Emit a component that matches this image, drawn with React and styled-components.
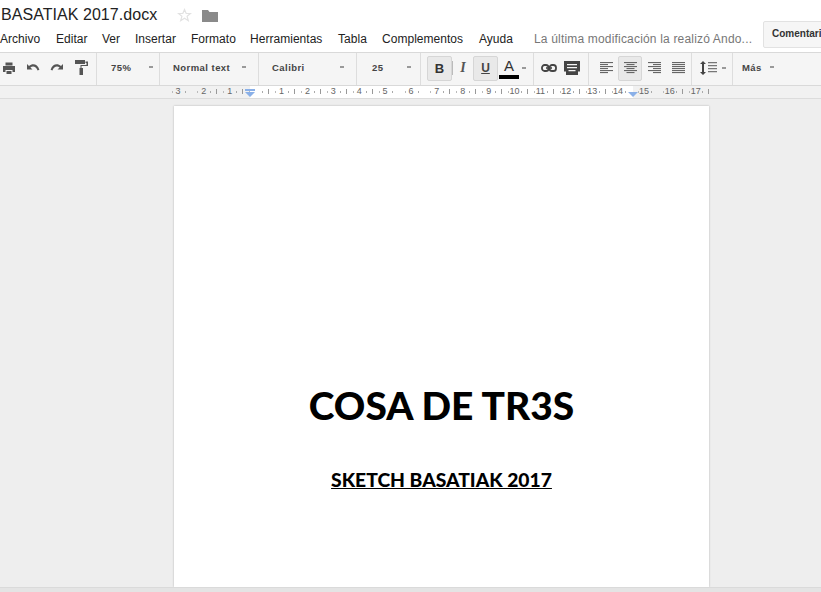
import React from 'react';
import styled, { createGlobalStyle } from 'styled-components';

const Global = createGlobalStyle`
  html, body { margin: 0; padding: 0; height: 100%; overflow: hidden; background: #eeeeee; }
  #root { height: 100%; }
`;

const Page = styled.div`
  width: 821px;
  height: 592px;
  display: flex;
  flex-direction: column;
  overflow: hidden;
  font-family: "Liberation Sans", Arial, sans-serif;
  color: #222;
`;

const Header = styled.header`
  height: 52px;
  display: flex;
  background: #fff;
`;

const HeaderLeft = styled.div`
  width: 763px;
  flex: none;
`;

const TitleRow = styled.div`
  height: 30px;
  display: flex;
  align-items: center;
  padding-left: 1px;
`;

const DocTitle = styled.div`
  font-size: 16px;
  letter-spacing: 0.05px;
  line-height: 30px;
  color: #222;
  width: 176px;
`;

const TitleGap = styled.span`
  width: 10px;
  flex: none;
`;

const MenuRow = styled.nav`
  height: 22px;
  display: flex;
  align-items: center;
  font-size: 12px;
  padding-bottom: 4px;
  box-sizing: border-box;
`;

const MenuItem = styled.span`
  width: ${({ $w }) => $w}px;
  flex: none;
  color: #222;
  letter-spacing: 0.03px;
`;

const LastEdit = styled.span`
  color: #777;
  white-space: nowrap;
  letter-spacing: 0.18px;
`;

const CommentButton = styled.button`
  width: 70px;
  height: 27px;
  margin-top: 21px;
  flex: none;
  padding: 0 0 2px 8px;
  text-align: left;
  border: 1px solid #e2e2e2;
  border-radius: 2px;
  background: #f6f6f6;
  font: bold 10px "Liberation Sans", Arial, sans-serif;
  color: #333;
`;

const Toolbar = styled.div`
  height: 32px;
  display: flex;
  background: #f5f5f5;
  border-top: 1px solid #d9d9d9;
  border-bottom: 1px solid #d9d9d9;
`;

const Group = styled.div`
  width: ${({ $w }) => $w}px;
  flex: none;
  display: flex;
  align-items: center;
  gap: ${({ $gap }) => $gap || 0}px;
  padding: 0 0 2px ${({ $pl }) => $pl || 0}px;
  box-sizing: border-box;
  border-right: ${({ $plain }) => ($plain ? 'none' : '1px solid #dddddd')};
`;

const Drop = styled.div`
  flex: 1;
  display: flex;
  align-items: center;
  justify-content: space-between;
  padding: 0 ${({ $pr }) => $pr || 10}px 2px 0;
  font-size: 9.5px;
  font-weight: bold;
  letter-spacing: 0.45px;
  color: #444;
`;

const Caret = styled.span`
  width: 4px;
  height: 1.5px;
  background: #999;
  flex: none;
`;

const IconButton = styled.div`
  width: ${({ $w }) => $w || 18}px;
  height: 25px;
  flex: none;
  display: flex;
  align-items: center;
  justify-content: center;
  box-sizing: border-box;
  border-radius: 2px;
  border: 1px solid ${({ $on }) => ($on ? '#d6d6d6' : 'transparent')};
  background: ${({ $on }) => ($on ? '#e9e9e9' : 'transparent')};
`;

const BoldGlyph = styled.b`
  font-size: 13px;
  color: #333;
`;

const ItalicGlyph = styled.i`
  font: italic bold 14px "Liberation Serif", serif;
  color: #555;
`;

const UnderGlyph = styled.b`
  font-size: 12px;
  color: #444;
  text-decoration: underline;
`;

const Divider = styled.span`
  width: 1px;
  height: 14px;
  background: #bbb;
  flex: none;
`;

const ColorButton = styled.div`
  width: 20px;
  flex: none;
  margin: 0 3px 0 1px;
  display: flex;
  flex-direction: column;
  align-items: center;
  font-size: 15px;
  line-height: 15px;
  color: #333;
`;

const ColorBar = styled.span`
  width: 20px;
  height: 4px;
  background: #000;
  margin-top: 2px;
`;

const RulerBar = styled.div`
  height: 12px;
  display: flex;
  background: #f1f1f1;
  border-bottom: 1px solid #dcdcdc;
  padding-left: 165px;
`;

const Ruler = styled.div`
  position: relative;
  display: flex;
  width: 544px;
  height: 12px;
  background: linear-gradient(
    to right,
    transparent 85px,
    #fff 85px,
    #fff 468px,
    transparent 468px
  );
`;

const RulerCell = styled.div`
  width: 25.9px;
  flex: none;
  height: 12px;
  font-size: 9px;
  line-height: 11px;
  color: #666;
  text-align: center;
  background:
    linear-gradient(#bbb, #bbb) 6.5px 5px / 1px 2px no-repeat,
    linear-gradient(#aaa, #aaa) 19.5px 5px / 1px 2px no-repeat,
    linear-gradient(#999, #999) 25.5px 3px / 1px 5px no-repeat;
`;

const RulerMark = styled.svg`
  position: absolute;
  top: 3px;
  left: ${({ $x }) => $x}px;
`;

const Canvas = styled.main`
  height: 488px;
  background: #eeeeee;
  padding: 7px 0 0 174px;
  box-sizing: border-box;
  overflow: hidden;
`;

const Sheet = styled.section`
  width: 535px;
  height: 481px;
  background: #fff;
  box-shadow: 0 0 2px rgba(0, 0, 0, 0.25);
  display: flex;
  flex-direction: column;
  align-items: center;
  padding: 271px 0 0 0;
  box-sizing: border-box;
`;

const Heading = styled.h1`
  margin: 0;
  font: 900 38.9px/56px Lato, sans-serif;
  color: #000;
`;

const SubHeading = styled.h2`
  margin: 34px 0 0;
  font: 900 19.3px/26px Lato, sans-serif;
  color: #000;
  text-decoration: underline;
`;

const StatusBar = styled.div`
  flex: 1;
  background: #e4e4e4;
  border-top: 1px solid #dadada;
`;

const Svg = ({ w = 14, h = 14, vb, children, fill = '#555' }) => (
  <svg width={w} height={h} viewBox={vb || `0 0 ${w} ${h}`} fill={fill}>{children}</svg>
);

const PrintIcon = () => (
  <Svg>
    <path d="M3.5 1.5h7v3h-7zM1 5h12v6h-2.5V9h-7v2H1zM4.5 10h5v3h-5z" />
  </Svg>
);
const UndoIcon = () => (
  <Svg>
    <path d="M1 3v5.5h5.5L4.4 6.4C6.8 4.6 10.2 5.4 11.6 9.5L13.4 8.8C11.6 3.2 6.8 1.9 3 5z" />
  </Svg>
);
const RedoIcon = () => (
  <Svg>
    <path d="M13 3v5.5H7.5l2.1-2.1C7.2 4.6 3.8 5.4 2.4 9.5L.6 8.8C2.4 3.2 7.2 1.9 11 5z" />
  </Svg>
);
const PaintIcon = () => (
  <Svg h={16}>
    <path d="M1 0h10v4H1zM11.5 1.5H14v4.5H7.5v2H9v7H5.5V8H6.5V5H12.5V3h-1z" />
  </Svg>
);
const LinkIcon = () => (
  <Svg w={16} h={8} fill="none">
    <rect x="1" y="1" width="6.5" height="6" rx="2.6" stroke="#444" strokeWidth="1.8" />
    <rect x="8.5" y="1" width="6.5" height="6" rx="2.6" stroke="#444" strokeWidth="1.8" />
    <path d="M5 4h6" stroke="#444" strokeWidth="1.6" />
  </Svg>
);
const NoteIcon = () => (
  <Svg w={16} h={14} fill="#444">
    <path d="M0 0h16v10.5h-2V14H2v-3.5H0zM3 3v1.2h10V3zM3 6v1.2h10V6zM4.5 9v1.2h7V9z" fillRule="evenodd" />
  </Svg>
);
const StarIcon = () => (
  <Svg w={15} h={15} fill="none">
    <path d="M7.5 1.5l1.7 4h4.3l-3.4 2.8 1.2 4.4-3.8-2.5-3.8 2.5 1.2-4.4L1.5 5.5h4.3z" stroke="#e2e2e2" strokeWidth="1.2" />
  </Svg>
);
const FolderIcon = () => (
  <Svg w={16} h={13} fill="#8a8a8a">
    <path d="M0 1h6l1.5 2H16v10H0z" />
  </Svg>
);
const AlignIcon = ({ rows }) => (
  <Svg w={13} h={12} fill="#666">
    {rows.map(([x, w], i) => (
      <rect key={i} x={x} y={i * 2} width={w} height="1.1" />
    ))}
  </Svg>
);
const SpacingIcon = () => (
  <Svg w={17} h={14} fill="#777">
    <path d="M3 0l3 3H4v8h2l-3 3-3-3h2V3H0z" fill="#444" />
    <path d="M8 1h9v1.2H8zM8 4h9v1.2H8zM8 7h9v1.2H8zM8 10h9v1.2H8z" />
  </Svg>
);

const left = [[0, 13], [0, 8], [0, 13], [0, 8], [0, 13], [0, 8]];
const center = [[0, 13], [2.5, 8], [0, 13], [2.5, 8], [0, 13], [2.5, 8]];
const right = [[0, 13], [5, 8], [0, 13], [5, 8], [0, 13], [5, 8]];
const justify = [[0, 13], [0, 13], [0, 13], [0, 13], [0, 13], [0, 13]];

const menu = [
  ['Archivo', 56], ['Editar', 46], ['Ver', 33], ['Insertar', 56], ['Formato', 59],
  ['Herramientas', 88], ['Tabla', 44], ['Complementos', 97], ['Ayuda', 55],
];

const rulerNums = [3, 2, 1, '', 1, 2, 3, 4, 5, 6, 7, 8, 9, 10, 11, 12, 13, 14, 15, 16, 17];

export default function App() {
  return (
    <Page>
      <Global />
      <Header>
        <HeaderLeft>
          <TitleRow>
            <DocTitle>BASATIAK 2017.docx</DocTitle>
            <StarIcon />
            <TitleGap />
            <FolderIcon />
          </TitleRow>
          <MenuRow>
            {menu.map(([label, w]) => (
              <MenuItem key={label} $w={w}>{label}</MenuItem>
            ))}
            <LastEdit>La última modificación la realizó Ando...</LastEdit>
          </MenuRow>
        </HeaderLeft>
        <CommentButton>Comentarios</CommentButton>
      </Header>

      <Toolbar>
        <Group $w={97} $gap={6}>
          <IconButton><PrintIcon /></IconButton>
          <IconButton><UndoIcon /></IconButton>
          <IconButton><RedoIcon /></IconButton>
          <IconButton><PaintIcon /></IconButton>
        </Group>
        <Group $w={63} $pl={14}><Drop $pr={6}>75%<Caret /></Drop></Group>
        <Group $w={99} $pl={13}><Drop $pr={12}>Normal text<Caret /></Drop></Group>
        <Group $w={98} $pl={13}><Drop $pr={12}>Calibri<Caret /></Drop></Group>
        <Group $w={64} $pl={15}><Drop $pr={9}>25<Caret /></Drop></Group>
        <Group $w={113} $pl={6}>
          <IconButton $on $w={25}><BoldGlyph>B</BoldGlyph></IconButton>
          <Divider />
          <IconButton $w={20}><ItalicGlyph>I</ItalicGlyph></IconButton>
          <IconButton $on $w={25}><UnderGlyph>U</UnderGlyph></IconButton>
          <ColorButton>A<ColorBar /></ColorButton>
          <Caret />
        </Group>
        <Group $w={55} $pl={7} $gap={7}>
          <LinkIcon />
          <NoteIcon />
        </Group>
        <Group $w={103} $pl={5}>
          <IconButton $w={24}><AlignIcon rows={left} /></IconButton>
          <IconButton $w={24} $on><AlignIcon rows={center} /></IconButton>
          <IconButton $w={24}><AlignIcon rows={right} /></IconButton>
          <IconButton $w={24}><AlignIcon rows={justify} /></IconButton>
        </Group>
        <Group $w={41} $pl={8} $gap={5}>
          <SpacingIcon />
          <Caret />
        </Group>
        <Group $w={60} $pl={9} $plain>
          <Drop $pr={19}>Más<Caret /></Drop>
        </Group>
      </Toolbar>

      <RulerBar>
        <Ruler>
          {rulerNums.map((n, i) => (
            <RulerCell key={i}>{n}</RulerCell>
          ))}
          <RulerMark $x={80} width="10" height="8" viewBox="0 0 10 8">
            <path d="M0 0h10v2H0zM0 3h10L5 8z" fill="#8ab0e8" />
          </RulerMark>
          <RulerMark $x={463} width="10" height="8" viewBox="0 0 10 8">
            <path d="M0 3h10L5 8z" fill="#8ab0e8" />
          </RulerMark>
        </Ruler>
      </RulerBar>

      <Canvas>
        <Sheet>
          <Heading>COSA DE TR3S</Heading>
          <SubHeading>SKETCH BASATIAK 2017</SubHeading>
        </Sheet>
      </Canvas>
      <StatusBar />
    </Page>
  );
}
